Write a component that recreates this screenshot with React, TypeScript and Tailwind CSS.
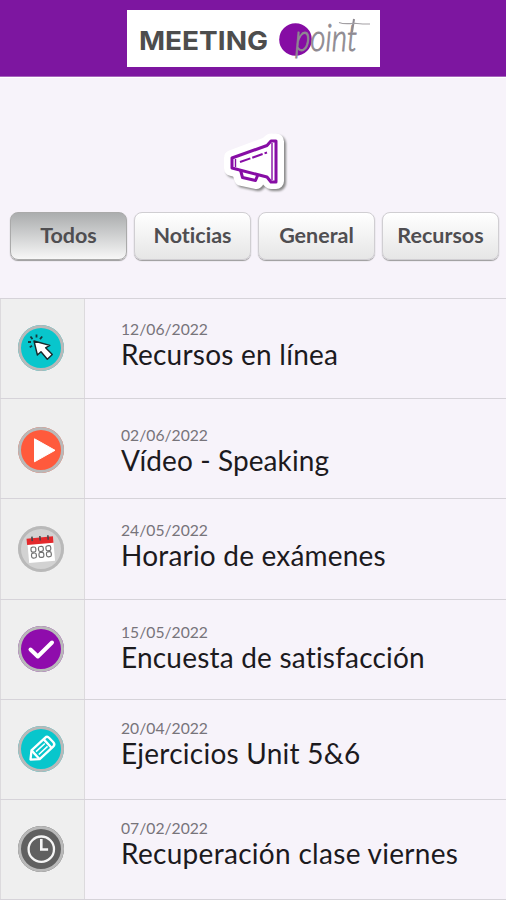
import type { ReactNode } from "react";

const tabs = ["Todos", "Noticias", "General", "Recursos"];

function CursorIcon() {
  return (
    <svg viewBox="0 0 46 46" className="size-full">
      <g stroke="#17383b" strokeWidth="1.8">
        <path d="M12.5 11.5l2 2.6M18.5 9.5v3M24.2 11.5l-2.2 2.6M10 17h3M11.7 22.4l2.3-1.7" />
      </g>
      <path
        d="M16 16l3.4 14 3.6-3.2 6.3 7.4 5-4.6-6.7-6.8 4.2-2.4z"
        fill="#fff"
        stroke="#17282a"
        strokeWidth="1.4"
        strokeLinejoin="round"
      />
    </svg>
  );
}

function PlayIcon() {
  return (
    <svg viewBox="0 0 46 46" className="size-full">
      <path d="M16.5 11.8v23L37 23.3z" fill="#fff" stroke="#fff" strokeLinejoin="round" />
    </svg>
  );
}

function CalendarIcon() {
  return (
    <svg viewBox="0 0 46 46" className="size-full">
      <g transform="rotate(-5 22 23)">
        <path d="M10 13h26v23H10z" fill="#fff" />
        <path d="M9.5 11.5H36V18H9.5z" fill="#e3292c" />
        <path d="M15 10v4.5M23 10v4.5M31 10v4.5" stroke="#4c454a" strokeWidth="1.6" />
        <g fill="none" stroke="#707070" strokeWidth="1.2">
          <rect x="13" y="20.5" width="4.8" height="5" rx="1.7" />
          <rect x="20.5" y="20.5" width="4.8" height="5" rx="1.7" />
          <rect x="28" y="20.5" width="4.8" height="5" rx="1.7" />
          <rect x="13" y="26.5" width="4.8" height="5" rx="1.7" />
          <rect x="20.5" y="26.5" width="4.8" height="5" rx="1.7" />
          <rect x="28" y="26.5" width="4.8" height="5" rx="1.7" />
        </g>
      </g>
    </svg>
  );
}

function CheckIcon() {
  return (
    <svg viewBox="0 0 46 46" className="size-full">
      <path
        d="M12.5 23.5l7.3 7L34 16.5"
        fill="none"
        stroke="#fff"
        strokeWidth="4"
        strokeLinecap="round"
        strokeLinejoin="round"
      />
    </svg>
  );
}

function PencilIcon() {
  return (
    <svg viewBox="0 0 46 46" className="size-full">
      <g
        transform="translate(23.8 23) rotate(-43)"
        fill="none"
        stroke="#fff"
        strokeWidth="2.3"
        strokeLinejoin="round"
      >
        <path d="M-15.5 0l7-6H10q3 0 3 3v6q0 3-3 3H-8.5z" />
        <path d="M-8.5-6v12M8-6V6" />
        <path d="M-6-2H6M-6 2H6" strokeWidth="1.5" />
      </g>
    </svg>
  );
}

function ClockIcon() {
  return (
    <svg viewBox="0 0 46 46" className="size-full">
      <circle cx="23.3" cy="23.2" r="12.7" fill="none" stroke="#f5f5f5" strokeWidth="2.3" />
      <path d="M23.3 13v10.5h6.8" fill="none" stroke="#f5f5f5" strokeWidth="2.6" />
    </svg>
  );
}

type Item = {
  date: string;
  title: string;
  color: string;
  pad: string;
  iconPad: string;
  track: string;
  icon: ReactNode;
};

const items: Item[] = [
  { date: "12/06/2022", title: "Recursos en línea", color: "bg-[#08c6cc]", pad: "pt-[21px]", iconPad: "pt-[26px]", track: "tracking-[0.25px]", icon: <CursorIcon /> },
  { date: "02/06/2022", title: "Vídeo - Speaking", color: "bg-[#ff5a3c]", pad: "pt-[27px]", iconPad: "pt-[28px]", track: "tracking-[0.1px]", icon: <PlayIcon /> },
  { date: "24/05/2022", title: "Horario de exámenes", color: "bg-[#d2d2d2]", pad: "pt-[22px]", iconPad: "pt-[27px]", track: "tracking-[0.2px]", icon: <CalendarIcon /> },
  { date: "15/05/2022", title: "Encuesta de satisfacción", color: "bg-[#8f0cac]", pad: "pt-[23.5px]", iconPad: "pt-[26px]", track: "tracking-[0.2px]", icon: <CheckIcon /> },
  { date: "20/04/2022", title: "Ejercicios Unit 5&6", color: "bg-[#08c6cc]", pad: "pt-[19.5px]", iconPad: "pt-[26px]", track: "tracking-[0.25px]", icon: <PencilIcon /> },
  { date: "07/02/2022", title: "Recuperación clase viernes", color: "bg-[#606060]", pad: "pt-[19.5px]", iconPad: "pt-[26px]", track: "tracking-[0.3px]", icon: <ClockIcon /> },
];

function Logo() {
  return (
    <div className="h-[57px] w-[253px] bg-white">
      <svg viewBox="0 0 253 57" className="size-full">
        <text
          x="12"
          y="40"
          textLength="129"
          lengthAdjust="spacingAndGlyphs"
          fill="#4d4d4d"
          fontSize="26"
          fontWeight="700"
          fontFamily="Inter, sans-serif"
        >
          MEETING
        </text>
        <circle cx="168.5" cy="29.5" r="16.3" fill="#860ca4" />
        <text
          transform="translate(168 41) scale(1 1.45)"
          textLength="62"
          lengthAdjust="spacingAndGlyphs"
          fill="#8f8a91"
          stroke="#8f8a91"
          strokeWidth="0.6"
          fontSize="26"
          fontStyle="italic"
          fontWeight="300"
          fontFamily="Lato, sans-serif"
        >
          point
        </text>
        <path d="M225 22L227 9" stroke="#8f8a91" strokeWidth="2" />
        <path d="M212 12.5c6 2.5 12 .5 18 1 5 .5 9 .5 13 .5" fill="none" stroke="#a3a0a4" strokeWidth="1.2" />
      </svg>
    </div>
  );
}

function Megaphone() {
  return (
    <svg viewBox="0 0 72 64" className="h-16 w-[72px] overflow-visible drop-shadow-[2px_2px_1px_#888]">
      <g stroke="#fff" strokeWidth="16" strokeLinejoin="round" fill="#fff">
        <path d="M15 27L50 14l4-3.5h5V50h-5l-4-4-35-9z" />
        <path d="M23 40l2 7 14 3 2-6" />
      </g>
      <g stroke="#870da5" strokeWidth="3" strokeLinejoin="round" fill="#fff">
        <path d="M23.5 39l2 7.5 13 3 2.5-6" />
        <path d="M15 27L50 14.5l4-4.5h5v41h-5l-4-5-35-9z" />
        <path d="M18.5 28v8M55 12v37" strokeWidth="1.4" />
        <path d="M23 31l27-9.5" strokeWidth="2" strokeDasharray="11 2" />
      </g>
    </svg>
  );
}

export default function App() {
  return (
    <div className="h-[900px] w-[506px] overflow-hidden bg-[#f7f3fa] font-[Lato,sans-serif]">
      <header className="flex h-[77px] justify-center border-b border-[#a565bc] bg-[#7d16a0] pt-[10px] pl-px">
        <Logo />
      </header>

      <div className="flex h-[135px] justify-center border-t border-white pt-[53px]">
        <Megaphone />
      </div>

      <nav className="flex h-[86px] gap-[7px] pl-[10px]">
        {tabs.map((tab, i) => (
          <button
            key={tab}
            className={`flex h-[48px] w-[117px] items-center justify-center rounded-[8px] border pb-px text-[21.5px] font-bold text-[#4f4e51] shadow-[0_1px_1px_#999] [font-variant-ligatures:none] ${
              i === 0
                ? "border-[#aaa] bg-linear-to-b from-[#abadae] to-[#f7f7f7]"
                : "border-[#d0ced2] bg-linear-to-b from-white to-[#e6e6e6]"
            }`}
          >
            {tab}
          </button>
        ))}
      </nav>

      <ul>
        {items.map((item) => (
          <li key={item.date} className="flex h-[100.2px] border-t border-[#d6d3d9]">
            <div className={`w-[85px] border-x border-[#dcdadd] bg-[#efefef] pl-[17px] ${item.iconPad}`}>
              <div className={`size-[46px] rounded-full shadow-[inset_0_0_0_3px_#b9b9b9] ${item.color}`}>
                {item.icon}
              </div>
            </div>
            <div className={`pl-[36px] ${item.pad}`}>
              <p className="h-[18px] text-[15.7px] leading-[18px] text-[#77747a]">{item.date}</p>
              <h2 className={`text-[28px] leading-[32px] whitespace-nowrap text-[#1c1a1e] ${item.track}`}>
                {item.title}
              </h2>
            </div>
          </li>
        ))}
        <li className="border-t border-[#d6d3d9]" />
      </ul>
    </div>
  );
}
